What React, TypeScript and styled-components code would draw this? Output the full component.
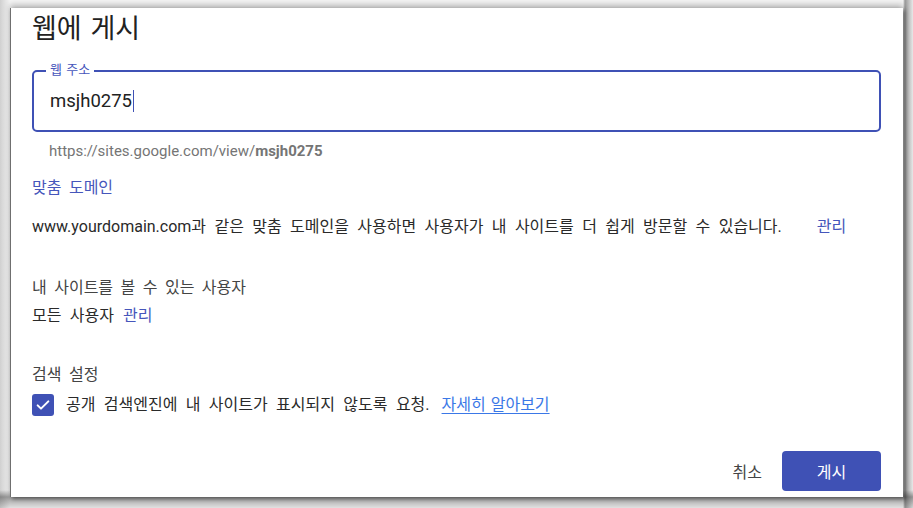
import styled, { createGlobalStyle } from 'styled-components';

const GlobalStyle = createGlobalStyle`
  html, body {
    margin: 0;
    padding: 0;
    background: #ffffff;
  }
  body {
    font-family: Roboto, "Noto Sans CJK KR", "Noto Sans", sans-serif;
    color: #222222;
  }
`;

const Frame = styled.div`
  width: 913px;
  height: 508px;
  box-sizing: border-box;
  padding: 8px 10px 11px 10px;
  background: linear-gradient(180deg, rgba(0, 0, 0, 0) 490px, rgba(0, 0, 0, 0.35) 497px, rgba(0, 0, 0, 0.08) 508px),
    linear-gradient(90deg, #d0d0d0 0px, #f4f4f4 10px, #f4f4f4 903px, #9a9a9a 905px, #e8e8e8 913px);
  overflow: hidden;
`;

const Dialog = styled.div`
  height: 100%;
  box-sizing: border-box;
  background: #ffffff;
  border-left: 1px solid #6f6f6f;
  box-shadow: 0 -3px 6px rgba(0, 0, 0, 0.25), 2px 2px 4px rgba(0, 0, 0, 0.45);
  padding: 4px 22px 0 21px;
  display: flex;
  flex-direction: column;
  word-spacing: 3.5px;
`;

const Title = styled.h1`
  margin: 0;
  font-size: 27px;
  font-weight: 400;
  line-height: 34px;
  color: #222222;
  word-spacing: 2px;
`;

const Field = styled.div`
  position: relative;
  margin-top: 24px;
  padding: 0 16px;
  height: 62px;
  box-sizing: border-box;
  border: 2px solid #3f51b5;
  border-radius: 5px;
  display: flex;
  align-items: center;
`;

const Label = styled.span`
  position: absolute;
  top: -9px;
  left: 12px;
  padding: 0 4px;
  background: #ffffff;
  font-size: 13px;
  line-height: 14px;
  color: #4656bb;
  word-spacing: 1px;
`;

const InputText = styled.span`
  font-size: 18.5px;
  color: #222222;
  display: flex;
  align-items: center;
`;

const Caret = styled.span`
  display: inline-block;
  width: 1.5px;
  height: 22px;
  margin-left: 1px;
  background: #3f51b5;
`;

const Helper = styled.div`
  margin: 9px 0 0 17px;
  font-size: 15px;
  line-height: 20px;
  color: #757575;
  word-spacing: 0;
  b {
    font-weight: 700;
  }
`;

const Heading = styled.div<{ $tone?: 'link' | 'muted' }>`
  font-size: 16px;
  line-height: 20px;
  color: ${(p) => (p.$tone === 'link' ? '#4656bb' : '#444444')};
`;

const Row = styled.div<{ $gap?: number; $top?: number }>`
  display: flex;
  align-items: center;
  gap: ${(p) => p.$gap ?? 0}px;
  margin-top: ${(p) => p.$top ?? 0}px;
  font-size: 16px;
  line-height: 20px;
  color: #2a2a2a;
  word-spacing: 4.4px;
`;

const Section = styled.section<{ $top: number }>`
  margin-top: ${(p) => p.$top}px;
  display: flex;
  flex-direction: column;
`;

const Manage = styled.span`
  color: #4656bb;
`;

const Check = styled.span`
  width: 22px;
  height: 22px;
  border-radius: 3px;
  background: #3f51b5;
  display: inline-flex;
  align-items: center;
  justify-content: center;
  flex-shrink: 0;
`;

const Learn = styled.a`
  color: #3b78e7;
  text-decoration: underline;
  text-underline-offset: 3px;
  word-spacing: 1px;
`;

const Actions = styled.div`
  margin-top: auto;
  margin-bottom: 6px;
  display: flex;
  justify-content: flex-end;
  align-items: center;
  gap: 20px;
`;

const TextButton = styled.button`
  border: none;
  background: none;
  font-family: inherit;
  font-size: 16px;
  color: #444444;
  padding: 0;
`;

const PrimaryButton = styled.button`
  width: 99px;
  height: 40px;
  border: none;
  border-radius: 4px;
  background: #3f51b5;
  color: #ffffff;
  font-family: inherit;
  font-size: 16px;
`;

export default function App() {
  return (
    <>
      <GlobalStyle />
      <Frame>
        <Dialog>
          <Title>웹에 게시</Title>
          <Field>
            <Label>웹 주소</Label>
            <InputText>
              msjh0275
              <Caret />
            </InputText>
          </Field>
          <Helper>
            https://sites.google.com/view/<b>msjh0275</b>
          </Helper>
          <Section $top={17}>
            <Heading $tone="link">맞춤 도메인</Heading>
            <Row $gap={35} $top={19}>
              <span>www.yourdomain.com과 같은 맞춤 도메인을 사용하면 사용자가 내 사이트를 더 쉽게 방문할 수 있습니다.</span>
              <Manage>관리</Manage>
            </Row>
          </Section>
          <Section $top={41}>
            <Heading>내 사이트를 볼 수 있는 사용자</Heading>
            <Row $gap={9} $top={8}>
              <span>모든 사용자</span>
              <Manage>관리</Manage>
            </Row>
          </Section>
          <Section $top={39}>
            <Heading>검색 설정</Heading>
            <Row $gap={12} $top={9}>
              <Check>
                <svg width="16" height="16" viewBox="0 0 24 24" fill="none">
                  <path d="M4 12.5l5 5L20 6.5" stroke="#ffffff" strokeWidth="3" strokeLinecap="round" strokeLinejoin="round" />
                </svg>
              </Check>
              <span>공개 검색엔진에 내 사이트가 표시되지 않도록 요청.</span>
              <Learn>자세히 알아보기</Learn>
            </Row>
          </Section>
          <Actions>
            <TextButton>취소</TextButton>
            <PrimaryButton>게시</PrimaryButton>
          </Actions>
        </Dialog>
      </Frame>
    </>
  );
}
